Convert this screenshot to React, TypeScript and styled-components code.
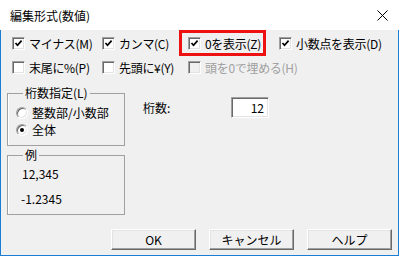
import React from 'react';
import styled, { createGlobalStyle } from 'styled-components';

const GlobalStyle = createGlobalStyle`
	html, body {
		margin: 0;
		padding: 0;
		background: #ffffff;
	}
	* {
		box-sizing: border-box;
	}
`;

const FONT = `"Noto Sans CJK JP", "Noto Sans", sans-serif`;

export default function App() {
	return (
		<>
			<GlobalStyle />
			<Window>
				<TitleBar>
					<TitleText>編集形式(数値)</TitleText>
					<CloseButton>
						<svg width="11" height="11" viewBox="0 0 11 11">
							<path d="M0.5 0.5 L10.5 10.5 M10.5 0.5 L0.5 10.5" stroke="#000" strokeWidth="1" />
						</svg>
					</CloseButton>
				</TitleBar>
				<Body>
					<CheckGrid>
						<CheckItem checked label="マイナス(M)" />
						<CheckItem checked label="カンマ(C)" />
						<HighlightCell>
							<CheckItem checked label="0を表示(Z)" />
							<RedFrame />
						</HighlightCell>
						<CheckItem checked label="小数点を表示(D)" />
						<CheckItem label="末尾に%(P)" />
						<CheckItem label="先頭に¥(Y)" />
						<CheckItem disabled label="頭を0で埋める(H)" />
					</CheckGrid>
					<Lower>
						<LeftColumn>
							<GroupBox $height={60}>
								<Legend>桁数指定(L)</Legend>
								<RadioList>
									<RadioItem label="整数部/小数部" />
									<RadioItem checked label="全体" />
								</RadioList>
							</GroupBox>
							<GroupBox $height={67}>
								<Legend>例</Legend>
								<Samples>
									<Sample>12,345</Sample>
									<Sample $shift={-1}>-1.2345</Sample>
								</Samples>
							</GroupBox>
						</LeftColumn>
						<RightColumn>
							<FieldRow>
								<FieldLabel>桁数:</FieldLabel>
								<NumberBox>12</NumberBox>
							</FieldRow>
						</RightColumn>
					</Lower>
					<ButtonRow>
						<PushButton>OK</PushButton>
						<PushButton>キャンセル</PushButton>
						<PushButton>ヘルプ</PushButton>
					</ButtonRow>
				</Body>
			</Window>
		</>
	);
}

function CheckItem({ checked, disabled, label }: { checked?: boolean; disabled?: boolean; label: string }) {
	return (
		<CheckRow>
			<CheckBox $disabled={disabled}>
				{checked && (
					<svg width="9" height="9" viewBox="0 0 9 9">
						<path d="M1.5 4 L3.5 6.2 L7.6 1.6" stroke="#000" strokeWidth="1.7" fill="none" />
					</svg>
				)}
			</CheckBox>
			<CheckLabel $disabled={disabled}>{label}</CheckLabel>
		</CheckRow>
	);
}

function RadioItem({ checked, label }: { checked?: boolean; label: string }) {
	return (
		<CheckRow>
			<RadioCircle>{checked && <RadioDot />}</RadioCircle>
			<RadioLabel>{label}</RadioLabel>
		</CheckRow>
	);
}

const Window = styled.div`
	width: 399px;
	height: 256px;
	display: flex;
	flex-direction: column;
	font-family: ${FONT};
	font-size: 12px;
	color: #000;
`;

const TitleBar = styled.div`
	height: 30px;
	background: #ffffff;
	display: flex;
	align-items: center;
	justify-content: space-between;
	padding: 0 10px 0 10px;
`;

const TitleText = styled.div`
	font-size: 12px;
	line-height: 14px;
	padding-top: 1px;
`;

const CloseButton = styled.div`
	width: 11px;
	height: 11px;
	display: flex;
	margin-right: 1px;
`;

const Body = styled.div`
	flex: 1;
	background: #f0f0f0;
	border: 1px solid #1a7fd4;
	border-top: none;
	display: flex;
	flex-direction: column;
	padding: 7px 5px 5px 5px;
`;

const CheckGrid = styled.div`
	display: grid;
	grid-template-columns: 90px 86px 91px auto;
	row-gap: 11px;
	margin-left: 6px;
`;

const HighlightCell = styled.div`
	position: relative;
`;

const RedFrame = styled.div`
	position: absolute;
	left: -9px;
	top: -7px;
	width: 87px;
	height: 26px;
	border: 3px solid #ee1111;
	pointer-events: none;
`;

const CheckRow = styled.div`
	display: flex;
	align-items: center;
	height: 13px;
	white-space: nowrap;
`;

const CheckBox = styled.div<{ $disabled?: boolean }>`
	width: 13px;
	height: 13px;
	flex: none;
	border: 1px solid;
	border-color: #a0a0a0 #ffffff #ffffff #a0a0a0;
	box-shadow: inset 1px 1px 0 #696969, inset -1px -1px 0 #e3e3e3;
	background: ${(p) => (p.$disabled ? '#f0f0f0' : '#ffffff')};
	display: flex;
	align-items: center;
	justify-content: center;
`;

const CheckLabel = styled.span<{ $disabled?: boolean }>`
	margin-left: 4px;
	line-height: 13px;
	letter-spacing: -0.3px;
	color: ${(p) => (p.$disabled ? '#a0a0a0' : '#000')};
`;

const Lower = styled.div`
	flex: 1;
	display: flex;
	margin-top: 12px;
`;

const LeftColumn = styled.div`
	width: 118px;
	display: flex;
	flex-direction: column;
	gap: 2px;
	margin-left: 1px;
`;

const GroupBox = styled.fieldset<{ $height: number }>`
	height: ${(p) => p.$height}px;
	margin: 0;
	padding: 0 0 0 8px;
	border: 1px solid #a0a0a0;
	box-shadow: inset 1px 0 0 #ffffff;
`;

const Legend = styled.legend`
	padding: 0 2px;
	margin-left: 7px;
	line-height: 14px;
	font-size: 12px;
`;

const RadioList = styled.div`
	display: flex;
	flex-direction: column;
	gap: 4px;
	margin-top: 6px;
`;

const RadioCircle = styled.div`
	width: 12px;
	height: 12px;
	flex: none;
	border-radius: 50%;
	border: 1px solid;
	border-color: #a0a0a0 #ffffff #ffffff #a0a0a0;
	box-shadow: inset 1px 1px 0 #696969, inset -1px -1px 0 #e3e3e3;
	background: #ffffff;
	display: flex;
	align-items: center;
	justify-content: center;
`;

const RadioDot = styled.div`
	width: 4px;
	height: 4px;
	border-radius: 50%;
	background: #000;
`;

const RadioLabel = styled.span`
	margin-left: 4px;
	line-height: 13px;
`;

const Samples = styled.div`
	display: flex;
	flex-direction: column;
	gap: 11px;
	margin-top: 5px;
	padding-left: 6px;
`;

const Sample = styled.div<{ $shift?: number }>`
	line-height: 14px;
	margin-left: ${(p) => p.$shift ?? 0}px;
`;

const RightColumn = styled.div`
	margin-left: 18px;
	padding-top: 11px;
`;

const FieldRow = styled.div`
	display: flex;
	align-items: center;
`;

const FieldLabel = styled.span`
	width: 88px;
	line-height: 14px;
`;

const NumberBox = styled.div`
	width: 38px;
	height: 21px;
	border: 1px solid;
	border-color: #a0a0a0 #ffffff #ffffff #a0a0a0;
	box-shadow: inset 1px 1px 0 #696969, inset -1px -1px 0 #e3e3e3;
	background: #ffffff;
	text-align: right;
	padding: 2px 4px 0 0;
	line-height: 15px;
`;

const ButtonRow = styled.div`
	display: flex;
	justify-content: flex-end;
	gap: 13px;
	padding-right: 1px;
`;

const PushButton = styled.div`
	width: 85px;
	height: 21px;
	background: #f0f0f0;
	border: 1px solid;
	border-color: #ffffff #696969 #696969 #ffffff;
	box-shadow: inset -1px -1px 0 #a0a0a0, inset 1px 1px 0 #e3e3e3;
	display: flex;
	align-items: center;
	justify-content: center;
	line-height: 14px;
`;
